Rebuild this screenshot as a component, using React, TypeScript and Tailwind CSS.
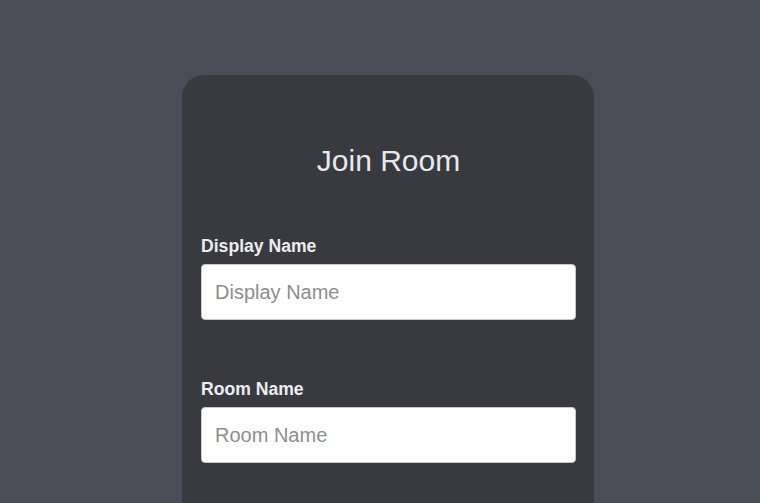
export default function App() {
    return (
        <div className="min-h-screen w-full bg-[#4a4d58] flex justify-center pl-[16px] pt-[75px] font-['Liberation_Sans',Arial,sans-serif]">
            <div className="w-[412px] bg-[#393a40] rounded-[22px] pl-[19px] pr-[18px] pt-[69px] pb-[80px] flex flex-col">
                <h1 className="text-center text-[30px] leading-[34px] text-[#e8e8f0] font-normal">Join Room</h1>

                <div className="flex flex-col mt-[58px]">
                    <label className="text-[17.6px] leading-[20px] font-bold text-[#ececf0]">Display Name</label>
                    <input
                        type="text"
                        placeholder="Display Name"
                        className="mt-[8px] h-[56px] w-full rounded-[4px] border border-[#c8c8c8] bg-white px-[13px] text-[20px] text-[#333] placeholder:text-[#8e8e8e] outline-none"
                    />
                </div>

                <div className="flex flex-col mt-[59px]">
                    <label className="text-[17.6px] leading-[20px] font-bold text-[#ececf0]">Room Name</label>
                    <input
                        type="text"
                        placeholder="Room Name"
                        className="mt-[8px] h-[56px] w-full rounded-[4px] border border-[#c8c8c8] bg-white px-[13px] text-[20px] text-[#333] placeholder:text-[#8e8e8e] outline-none"
                    />
                </div>
            </div>
        </div>
    );
}
